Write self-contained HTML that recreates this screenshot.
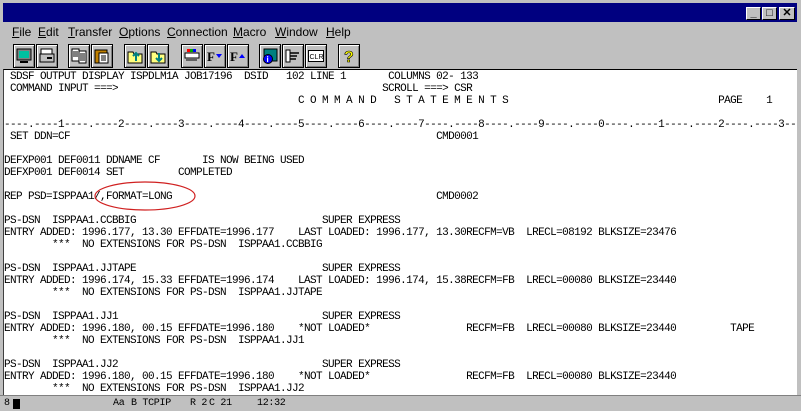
<!DOCTYPE html>
<html><head><meta charset="utf-8"><style>
*{margin:0;padding:0;box-sizing:border-box}
body{width:801px;height:411px;background:#c0c0c0;position:relative;overflow:hidden;font-family:"Liberation Sans",sans-serif}
.title{position:absolute;left:3px;top:3px;width:794px;height:19px;background:#000080}
.wb{position:absolute;top:7px;width:15px;height:13px;background:#c0c0c0;border:1px solid;border-color:#fff #000 #000 #fff;font-size:11px;font-weight:bold;text-align:center;line-height:11px;color:#000}
.menu{position:absolute;top:25px;font-size:12px;color:#000}
.menu span{position:absolute;white-space:nowrap}
.menu u{text-decoration:underline}
.btn{position:absolute;top:44px;width:22px;height:24px;background:#c0c0c0;border:1px solid #000;box-shadow:inset 1px 1px 0 #fff,inset -1px -1px 0 #808080}
.btn svg{position:absolute;left:2px;top:3px}
.term{position:absolute;left:3px;top:69px;width:794px;height:326px;background:#fff;border-top:1px solid #000;border-left:1px solid #404040}
.l{position:absolute;left:4px;font-family:"Liberation Mono",monospace;font-size:11px;letter-spacing:-0.6px;white-space:pre;color:#000;line-height:12px}
.status{position:absolute;left:0;top:395px;width:801px;height:16px;background:#c0c0c0;border-top:1px solid #808080;font-family:"Liberation Mono",monospace;font-size:10px;letter-spacing:-0.3px}
.status span{position:absolute;top:2px;white-space:pre}
</style></head><body>
<div class="title"></div>
<div class="wb" style="left:746px">_</div>
<div class="wb" style="left:762px">□</div>
<div class="wb" style="left:779px;width:16px">✕</div>
<div class="menu">
<span style="left:12px"><u>F</u>ile</span>
<span style="left:38px"><u>E</u>dit</span>
<span style="left:68px"><u>T</u>ransfer</span>
<span style="left:119px"><u>O</u>ptions</span>
<span style="left:167px"><u>C</u>onnection</span>
<span style="left:233px"><u>M</u>acro</span>
<span style="left:275px"><u>W</u>indow</span>
<span style="left:326px"><u>H</u>elp</span>
</div>
<div class="btn" style="left:13px"><svg width="16" height="16"><rect x="1" y="1" width="14" height="11" fill="#808080" stroke="#000"/><rect x="3" y="3" width="10" height="7" fill="#00c0a0"/><rect x="4" y="13" width="8" height="2" fill="#000"/></svg></div>
<div class="btn" style="left:36px"><svg width="16" height="16"><rect x="2" y="1" width="11" height="5" fill="#fff" stroke="#000"/><rect x="1" y="6" width="14" height="8" fill="#c0c0c0" stroke="#000"/><rect x="8" y="9" width="5" height="2" fill="#000"/></svg></div>
<div class="btn" style="left:68px"><svg width="16" height="16"><rect x="1" y="1" width="7" height="12" fill="#fff" stroke="#000"/><rect x="8" y="3" width="7" height="12" fill="#fff" stroke="#000"/><path d="M2 4h5M2 6h5M2 8h5M9 6h5M9 8h5M9 10h5M9 12h5" stroke="#000"/></svg></div>
<div class="btn" style="left:91px"><svg width="16" height="16"><rect x="1" y="2" width="12" height="13" fill="#c08000" stroke="#000"/><rect x="5" y="5" width="9" height="10" fill="#fff" stroke="#000"/><path d="M7 8h5M7 10h5M7 12h5" stroke="#000"/></svg></div>
<div class="btn" style="left:124px"><svg width="16" height="16"><path d="M1 4h5l1 2h8v9H1z" fill="#ffff80" stroke="#000"/><path d="M9 13V6M6 8l3-3 3 3" stroke="#008080" stroke-width="2" fill="none"/></svg></div>
<div class="btn" style="left:147px"><svg width="16" height="16"><path d="M1 4h5l1 2h8v9H1z" fill="#ffff80" stroke="#000"/><path d="M9 5v7M6 10l3 3 3-3" stroke="#008080" stroke-width="2" fill="none"/></svg></div>
<div class="btn" style="left:181px"><svg width="16" height="16"><rect x="3" y="1" width="3" height="3" fill="#f00"/><rect x="6" y="1" width="3" height="3" fill="#0a0"/><rect x="9" y="1" width="3" height="3" fill="#00f"/><rect x="1" y="5" width="14" height="5" fill="#fff" stroke="#000"/><path d="M2 12h11" stroke="#000"/></svg></div>
<div class="btn" style="left:204px"><svg width="16" height="16"><text x="0" y="13" font-family="Liberation Serif" font-size="13" font-weight="bold">F</text><path d="M9 6h6l-3 4z" fill="#00f"/></svg></div>
<div class="btn" style="left:227px"><svg width="16" height="16"><text x="0" y="13" font-family="Liberation Serif" font-size="13" font-weight="bold">F</text><path d="M9 10h6l-3-4z" fill="#00f"/></svg></div>
<div class="btn" style="left:259px"><svg width="16" height="16"><rect x="2" y="1" width="13" height="12" fill="#008080" stroke="#000"/><circle cx="6" cy="11" r="4.5" fill="#00f" stroke="#000"/><text x="4.5" y="14" font-size="8" fill="#fff" font-weight="bold">i</text></svg></div>
<div class="btn" style="left:282px"><svg width="16" height="16"><rect x="1" y="2" width="4" height="12" fill="#fff" stroke="#000"/><path d="M5 5h9M5 8h7M5 11h6" stroke="#000" stroke-width="1.5"/></svg></div>
<div class="btn" style="left:305px"><svg width="16" height="16"><rect x="0.5" y="2.5" width="15" height="11" fill="#fff" stroke="#000"/><text x="1.5" y="11" font-size="7" font-family="Liberation Sans">CLR</text></svg></div>
<div class="btn" style="left:338px"><svg width="16" height="16"><text x="3" y="14" font-size="16" font-weight="bold" fill="#ff0" stroke="#000" stroke-width="0.6">?</text></svg></div>
<div class="term"></div>
<div class="l" style="top:71px"> SDSF OUTPUT DISPLAY ISPDLM1A JOB17196  DSID   102 LINE 1       COLUMNS 02- 133</div>
<div class="l" style="top:83px"> COMMAND INPUT ===>                                            SCROLL ===> CSR</div>
<div class="l" style="top:95px">                                                 C O M M A N D   S T A T E M E N T S                                   PAGE    1</div>
<div class="l" style="top:119px">----.----1----.----2----.----3----.----4----.----5----.----6----.----7----.----8----.----9----.----0----.----1----.----2----.----3--</div>
<div class="l" style="top:131px"> SET DDN=CF                                                             CMD0001</div>
<div class="l" style="top:155px">DEFXP001 DEF0011 DDNAME CF       IS NOW BEING USED</div>
<div class="l" style="top:167px">DEFXP001 DEF0014 SET         COMPLETED</div>
<div class="l" style="top:191px">REP PSD=ISPPAA1/,FORMAT=LONG                                            CMD0002</div>
<div class="l" style="top:215px">PS-DSN  ISPPAA1.CCBBIG                               SUPER EXPRESS</div>
<div class="l" style="top:227px">ENTRY ADDED: 1996.177, 13.30 EFFDATE=1996.177    LAST LOADED: 1996.177, 13.30RECFM=VB  LRECL=08192 BLKSIZE=23476</div>
<div class="l" style="top:239px">        ***  NO EXTENSIONS FOR PS-DSN  ISPPAA1.CCBBIG</div>
<div class="l" style="top:263px">PS-DSN  ISPPAA1.JJTAPE                               SUPER EXPRESS</div>
<div class="l" style="top:275px">ENTRY ADDED: 1996.174, 15.33 EFFDATE=1996.174    LAST LOADED: 1996.174, 15.38RECFM=FB  LRECL=00080 BLKSIZE=23440</div>
<div class="l" style="top:287px">        ***  NO EXTENSIONS FOR PS-DSN  ISPPAA1.JJTAPE</div>
<div class="l" style="top:311px">PS-DSN  ISPPAA1.JJ1                                  SUPER EXPRESS</div>
<div class="l" style="top:323px">ENTRY ADDED: 1996.180, 00.15 EFFDATE=1996.180    *NOT LOADED*                RECFM=FB  LRECL=00080 BLKSIZE=23440         TAPE</div>
<div class="l" style="top:335px">        ***  NO EXTENSIONS FOR PS-DSN  ISPPAA1.JJ1</div>
<div class="l" style="top:359px">PS-DSN  ISPPAA1.JJ2                                  SUPER EXPRESS</div>
<div class="l" style="top:371px">ENTRY ADDED: 1996.180, 00.15 EFFDATE=1996.180    *NOT LOADED*                RECFM=FB  LRECL=00080 BLKSIZE=23440</div>
<div class="l" style="top:383px">        ***  NO EXTENSIONS FOR PS-DSN  ISPPAA1.JJ2</div>
<svg style="position:absolute;left:0;top:0" width="801" height="411"><ellipse cx="145" cy="196" rx="50" ry="14" fill="none" stroke="#d02020" stroke-width="1.2"/></svg>
<div class="status">
<span style="left:4px">8</span>
<span style="left:13px;top:3px;width:7px;height:10px;background:#000"></span>
<span style="left:113px">Aa</span>
<span style="left:131px">B TCPIP</span>
<span style="left:190px">R 2</span>
<span style="left:209px">C 21</span>
<span style="left:257px">12:32</span>
</div>
</body></html>
